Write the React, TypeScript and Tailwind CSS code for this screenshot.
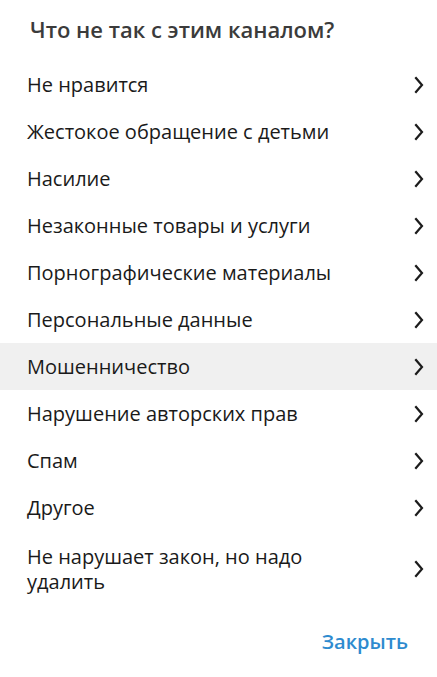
import React from 'react'

const reasons = [
  'Не нравится',
  'Жестокое обращение с детьми',
  'Насилие',
  'Незаконные товары и услуги',
  'Порнографические материалы',
  'Персональные данные',
  'Мошенничество',
  'Нарушение авторских прав',
  'Спам',
  'Другое',
  'Не нарушает закон, но надо удалить',
]

function Chevron() {
  return (
    <svg width="12" height="18" viewBox="0 0 12 18" fill="none" stroke="#1c1c1c" strokeWidth="2.2" strokeLinecap="square">
      <path d="M3 2l6 7-6 7" />
    </svg>
  )
}

function App() {
  return (
    <div className="w-[437px] h-[677px] bg-white font-['Open_Sans',sans-serif] flex flex-col">
      <h2 className="pl-[30px] pt-[13px] h-[61px] text-[22px] leading-[32px] font-semibold text-[#3b3b3b]">
        Что не так с этим каналом?
      </h2>

      <ul>
        {reasons.map((r, i) => (
          <li
            key={r}
            className={
              'flex items-center justify-between pl-[27px] pr-[12px] text-[20px] text-[#1a1a1a] ' +
              (i === 6 ? 'bg-[#f0f0f0] ' : '') +
              (i === reasons.length - 1 ? 'min-h-[76px] py-[10px]' : 'h-[47px]')
            }
          >
            <span className={i === reasons.length - 1 ? 'max-w-[300px] leading-[25px]' : ''}>{r}</span>
            <Chevron />
          </li>
        ))}
      </ul>

      <div className="flex justify-end pr-[29px] pt-[20px]">
        <button className="text-[20px] font-semibold text-[#2e8bcf]">Закрыть</button>
      </div>
    </div>
  )
}

export default App
